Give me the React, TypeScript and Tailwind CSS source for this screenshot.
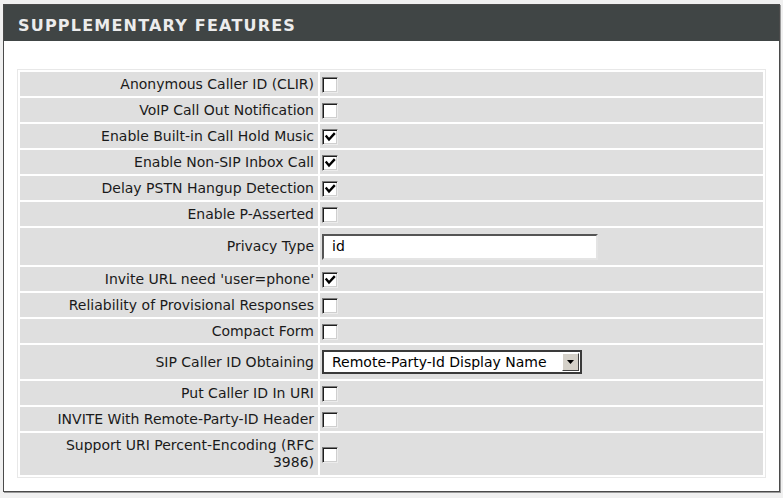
import React from "react";

type Row = {
  label: React.ReactNode;
  kind: "check" | "text" | "select";
  checked?: boolean;
  value?: string;
};

const rows: Row[] = [
  { label: "Anonymous Caller ID (CLIR)", kind: "check" },
  { label: "VoIP Call Out Notification", kind: "check" },
  { label: "Enable Built-in Call Hold Music", kind: "check", checked: true },
  { label: "Enable Non-SIP Inbox Call", kind: "check", checked: true },
  { label: "Delay PSTN Hangup Detection", kind: "check", checked: true },
  { label: "Enable P-Asserted", kind: "check" },
  { label: "Privacy Type", kind: "text", value: "id" },
  { label: "Invite URL need 'user=phone'", kind: "check", checked: true },
  { label: "Reliability of Provisional Responses", kind: "check" },
  { label: "Compact Form", kind: "check" },
  { label: "SIP Caller ID Obtaining", kind: "select", value: "Remote-Party-Id Display Name" },
  { label: "Put Caller ID In URI", kind: "check" },
  { label: "INVITE With Remote-Party-ID Header", kind: "check" },
  {
    label: (
      <>
        Support URI Percent-Encoding (RFC
        <br />
        3986)
      </>
    ),
    kind: "check",
  },
];

function Checkbox({ checked }: { checked?: boolean }) {
  return (
    <span className="inline-flex w-[16px] h-[16px] bg-white border border-t-[#7a7a7a] border-l-[#7a7a7a] border-b-[#ececec] border-r-[#ececec] shadow-[inset_1px_1px_0_#1e1e1e,inset_-1px_-1px_0_#cfcfcf] items-center justify-center align-middle">
      {checked && (
        <svg width="14" height="14" viewBox="0 0 14 14">
          <path d="M3.5 6.5 L6 9.5 L11 4" fill="none" stroke="#000" strokeWidth="2.4" strokeLinecap="square" />
        </svg>
      )}
    </span>
  );
}

function TextBox({ value }: { value?: string }) {
  return (
    <div className="w-[276px] h-[26px] bg-white border-2 border-t-[#555] border-l-[#555] border-b-[#e4e4e4] border-r-[#e4e4e4] flex items-center pl-[8px] text-[14px] text-black">
      {value}
    </div>
  );
}

function SelectBox({ value }: { value?: string }) {
  return (
    <div className="w-[260px] h-[24px] bg-white border-2 border-[#3a3a3a] flex items-center justify-between pl-[8px] pr-px text-[14px] text-black">
      <span>{value}</span>
      <span className="w-[17px] h-[18px] bg-[#d4d0c8] border border-t-white border-l-white border-b-[#404040] border-r-[#404040] flex items-center justify-center">
        <svg width="7" height="4" viewBox="0 0 7 4">
          <path d="M0 0 H7 L3.5 4 Z" fill="#000" />
        </svg>
      </span>
    </div>
  );
}

export default function App() {
  return (
    <div className="min-h-[498px] bg-[#f0f0f0] pt-[4px] pl-[3px] font-['DejaVu_Sans',sans-serif]">
      <div className="w-[777px] bg-white border border-[#4a4a4a] shadow-[1px_1px_0_#9a9a9a]">
        {/* Header */}
        <div className="h-[36px] bg-[#404545] flex items-center px-[14px] pt-[5px]">
          <h1 className="text-[16px] font-bold tracking-[1.2px] text-[#ececec]">SUPPLEMENTARY FEATURES</h1>
        </div>

        {/* Settings table */}
        <div className="pt-[28px] px-[13px] pb-[13px]">
          <table className="w-[749px] border border-[#e8e8e8] border-separate border-spacing-[2px] text-[14px] text-[#1a1a1a]">
            <tbody>
              {rows.map((row, i) => (
                <tr key={i}>
                  <td
                    className={`w-[298px] bg-[#dfdfdf] text-right pr-[4px] align-middle leading-[17px] ${
                      row.kind === "text" ? "h-[37px]" : row.kind === "select" ? "h-[34px]" : i === rows.length - 1 ? "h-[42px]" : "h-[24px]"
                    }`}
                  >
                    {row.label}
                  </td>
                  <td className="bg-[#dfdfdf] pl-[2px] align-middle">
                    {row.kind === "check" && <Checkbox checked={row.checked} />}
                    {row.kind === "text" && <TextBox value={row.value} />}
                    {row.kind === "select" && <SelectBox value={row.value} />}
                  </td>
                </tr>
              ))}
            </tbody>
          </table>
        </div>
      </div>
    </div>
  );
}
